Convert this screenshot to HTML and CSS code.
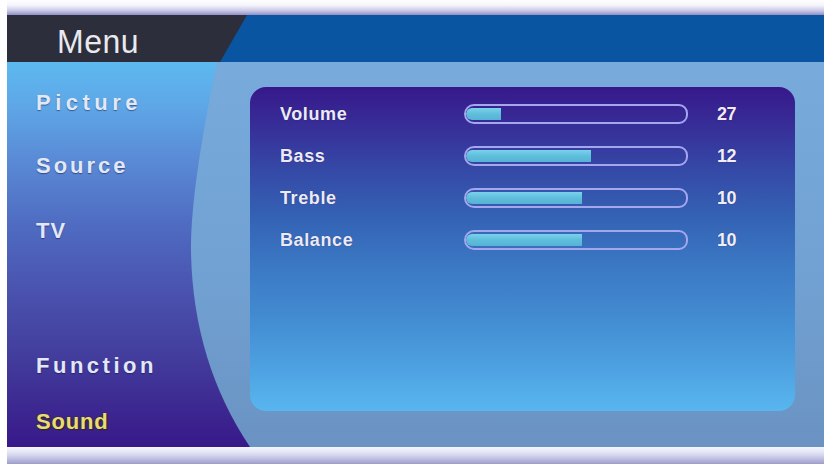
FILE: index.html
```html
<!DOCTYPE html>
<html>
<head>
<meta charset="utf-8">
<link rel="stylesheet" href="styles.css">
</head>
<body>
<div class="screen">
  <div class="band band-top"></div>
  <header class="header">
    <div class="title"><span>Menu</span></div>
  </header>
  <div class="content">
    <nav class="sidebar">
      <div class="item i-picture">Picture</div>
      <div class="item i-source">Source</div>
      <div class="item i-tv">TV</div>
      <div class="item i-function">Function</div>
      <div class="item i-sound active">Sound</div>
    </nav>
    <main class="main">
      <section class="panel">
        <div class="row">
          <span class="label">Volume</span>
          <span class="track"><span class="fill" style="width:35px"></span></span>
          <span class="num n27">27</span>
        </div>
        <div class="row">
          <span class="label">Bass</span>
          <span class="track"><span class="fill" style="width:125px"></span></span>
          <span class="num">12</span>
        </div>
        <div class="row">
          <span class="label">Treble</span>
          <span class="track"><span class="fill" style="width:116px"></span></span>
          <span class="num">10</span>
        </div>
        <div class="row">
          <span class="label">Balance</span>
          <span class="track"><span class="fill" style="width:116px"></span></span>
          <span class="num">10</span>
        </div>
      </section>
    </main>
  </div>
  <div class="band band-bottom"></div>
</div>
</body>
</html>
```
FILE: styles.css
```css
html, body {
  margin: 0;
  padding: 0;
  background: #ffffff;
}
body {
  width: 829px;
  height: 464px;
  overflow: hidden;
  font-family: "Liberation Sans", Arial, sans-serif;
}
.screen {
  margin-left: 7px;
  width: 817px;
  height: 464px;
  display: flex;
  flex-direction: column;
}
.band-top {
  height: 15px;
  background: linear-gradient(to bottom, #ffffff 0%, #f4f4fb 35%, #cacae8 70%, #9090c6 100%);
}
.band-bottom {
  height: 17px;
  background: linear-gradient(to bottom, #f4f6fc 0%, #e4e6f6 30%, #c4c4e4 65%, #9c9ccc 100%);
}
.header {
  height: 47px;
  background: #0a55a1;
  display: flex;
}
.title {
  width: 240px;
  height: 47px;
  background: #2c2e3b;
  clip-path: polygon(0 0, 240px 0, 213px 47px, 0 47px);
  display: flex;
  align-items: center;
  padding-left: 50px;
  box-sizing: border-box;
}
.title span {
  color: #e9e9ee;
  font-size: 32px;
  letter-spacing: 0.5px;
  margin-top: 6px;
  display: inline-block;
  transform: scaleY(1.05);
}
.content {
  height: 385px;
  display: grid;
  grid-template-columns: 1fr;
  grid-template-rows: 1fr;
}
.sidebar, .main {
  grid-area: 1 / 1;
}
.sidebar {
  background: linear-gradient(to bottom, #5db9f0 0%, #5ea6e6 12%, #5a8bd6 25%, #4f6cc2 42%, #4a52ae 60%, #433f9e 75%, #3c2890 90%, #38188a 100%);
  display: flex;
  flex-direction: column;
  padding-left: 29px;
}
.item {
  color: #e2e8f6;
  font-size: 22px;
  font-weight: bold;
  letter-spacing: 3px;
  height: 30px;
  line-height: 30px;
  text-shadow: 0 1px 1px rgba(20, 20, 70, 0.5);
}
.i-picture { margin-top: 26px; letter-spacing: 4.5px; }
.i-source { margin-top: 33px; }
.i-tv { margin-top: 35px; letter-spacing: 1px; }
.i-function { margin-top: 105px; letter-spacing: 3.5px; }
.i-sound { margin-top: 26px; }
.item.active {
  color: #eadb78;
  letter-spacing: 0.8px;
  text-shadow: 0 0 1px #3a3020, 1px 1px 1px #302818, -1px 0 1px #403820;
}
.main {
  margin-left: 183px;
  background: linear-gradient(to bottom, #78aadc 0%, #72a2d4 50%, #6c98c8 85%, #6a92c2 100%);
  clip-path: path("M27 0 L640 0 L640 385 L60 385 Q3 300 1 190 Q0 130 27 0 Z");
  padding: 25px 0 0 60px;
  box-sizing: border-box;
}
.panel {
  width: 545px;
  height: 324px;
  border-radius: 16px;
  background: linear-gradient(to bottom, #37188a 0%, #372e98 12%, #3548a6 25%, #3462b4 40%, #3b78c4 55%, #428ad0 70%, #4c9fdf 85%, #58b6ef 100%);
  padding-top: 6px;
  box-sizing: border-box;
  display: flex;
  flex-direction: column;
}
.row {
  height: 42px;
  display: grid;
  grid-template-columns: 184px 224px 29px auto;
  align-items: center;
  padding-left: 30px;
}
.label {
  grid-column: 1;
  color: #eceaf6;
  font-size: 18px;
  font-weight: bold;
  letter-spacing: 0.6px;
  text-shadow: 0 0 1px rgba(20, 10, 60, 0.6);
}
.track {
  grid-column: 2;
  height: 20px;
  border: 2px solid #a4a6ee;
  border-radius: 11px 10px 10px 11px;
  box-sizing: border-box;
  display: flex;
  padding: 2px;
  overflow: hidden;
}
.fill {
  height: 100%;
  border-radius: 7px 0 0 7px;
  background: linear-gradient(to bottom, #7ad2ea 0%, #5fbedc 50%, #56b2d6 100%);
  margin-left: -2px;
}
.num {
  grid-column: 4;
  color: #f0eef8;
  font-size: 18px;
  font-weight: bold;
  letter-spacing: -0.5px;
  text-shadow: 0 0 1px rgba(20, 10, 60, 0.6);
}
.n27 {
  color: #f4eaf4;
}
```
